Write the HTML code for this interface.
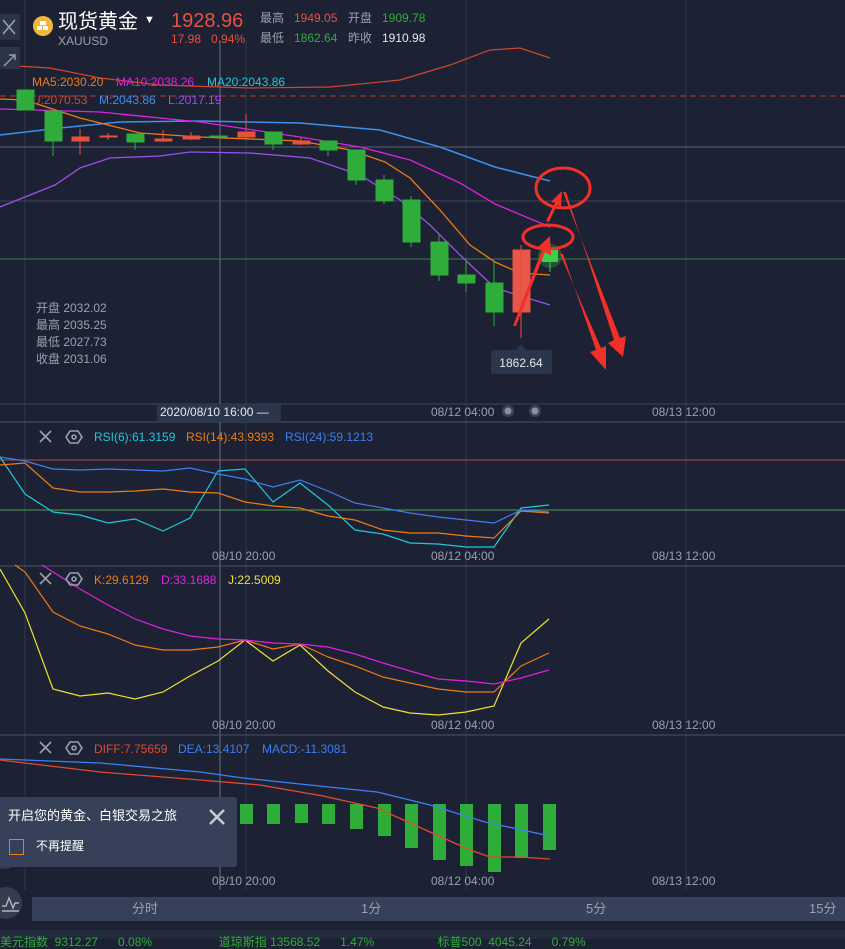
<!DOCTYPE html>
<html><head><meta charset="utf-8"><style>
body{margin:0;width:845px;height:939px;background:#1c2233;overflow:hidden;font-family:"Liberation Sans","Noto Sans CJK SC",sans-serif;position:relative}
.a{position:absolute;white-space:nowrap;line-height:1.15}
</style></head><body>
<svg class="a" style="left:0;top:0" width="845" height="939" font-family="Liberation Sans, Noto Sans CJK SC, sans-serif">
<g stroke="#2f3850" stroke-width="1">
<line x1="25" y1="0" x2="25" y2="890"/><line x1="466" y1="0" x2="466" y2="890"/><line x1="686" y1="0" x2="686" y2="890"/><line x1="246" y1="40" x2="246" y2="890"/>
</g>
<line x1="220" y1="40" x2="220" y2="890" stroke="#6a7184" stroke-width="1"/>
<line x1="0" y1="147" x2="845" y2="147" stroke="#5a6176"/>
<line x1="0" y1="201" x2="845" y2="201" stroke="#3e465c"/>
<line x1="0" y1="259" x2="845" y2="259" stroke="#3f7a4a"/>
<line x1="0" y1="404" x2="845" y2="404" stroke="#3e465c"/>
<line x1="0" y1="422" x2="845" y2="422" stroke="#4a5268"/>
<line x1="0" y1="566" x2="845" y2="566" stroke="#4a5268"/>
<line x1="0" y1="735" x2="845" y2="735" stroke="#4a5268"/>
<line x1="0" y1="96" x2="845" y2="96" stroke="#c0392b" stroke-dasharray="6,4"/>
<polyline fill="none" stroke="#d4442f" stroke-width="1.2" points="0,65 50,68 100,78 160,85 250,88 330,87 400,80 450,65 490,50 520,48 550,58"/>
<polyline fill="none" stroke="#3d8ff0" stroke-width="1.5" points="0,135 60,128 120,122 200,121 300,123 380,130 440,147 495,167 550,181"/>
<polyline fill="none" stroke="#e020e0" stroke-width="1.3" points="0,109 100,112 200,122 300,137 360,147 410,160 460,183 495,204 550,227"/>
<polyline fill="none" stroke="#f07a10" stroke-width="1.3" points="0,99 25,100 80,118 140,133 200,137 300,141 350,150 385,162 410,178 440,210 470,245 495,262 520,273 550,275"/>
<polyline fill="none" stroke="#9a50e8" stroke-width="1.3" points="0,207 55,185 80,168 110,158 160,156 190,152 250,153 310,158 360,175 400,200 430,225 460,255 495,288 550,305"/>
<g fill="#2ead3a" stroke="#2ead3a">
<rect x="17" y="90" width="17" height="20"/><rect x="45" y="111" width="17" height="30"/><line x1="53" y1="141" x2="53" y2="156"/>
<rect x="127" y="134" width="17" height="8"/><line x1="135" y1="142" x2="135" y2="150"/>
<rect x="210" y="136" width="17" height="1"/>
<rect x="265" y="132" width="17" height="12"/><line x1="273" y1="144" x2="273" y2="150"/>
<rect x="320" y="141" width="17" height="9"/><line x1="328" y1="150" x2="328" y2="156"/>
<rect x="348" y="150" width="17" height="30"/><line x1="356" y1="180" x2="356" y2="185"/>
<rect x="376" y="180" width="17" height="21"/><line x1="384" y1="175" x2="384" y2="204"/>
<rect x="403" y="200" width="17" height="42"/><line x1="411" y1="196" x2="411" y2="247"/>
<rect x="431" y="242" width="17" height="33"/><line x1="439" y1="234" x2="439" y2="281"/>
<rect x="458" y="275" width="17" height="8"/><line x1="466" y1="259" x2="466" y2="292"/>
<rect x="486" y="283" width="17" height="29"/><line x1="494" y1="262" x2="494" y2="326"/>
</g>
<circle cx="550" cy="256" r="12" fill="#2ead3a" opacity="0.35"/>
<rect x="542" y="250" width="16" height="12" fill="#3bd04a"/><line x1="550" y1="262" x2="550" y2="272" stroke="#3bd04a"/>
<g fill="#e8503f" stroke="#e8503f">
<rect x="72" y="137" width="17" height="4"/><line x1="80" y1="129" x2="80" y2="155"/>
<rect x="100" y="136" width="17" height="1"/><line x1="108" y1="133" x2="108" y2="140"/>
<rect x="155" y="139" width="17" height="2"/><line x1="163" y1="130" x2="163" y2="142"/>
<rect x="183" y="136" width="17" height="3"/><line x1="191" y1="132" x2="191" y2="140"/>
<rect x="238" y="132" width="17" height="5"/><line x1="246" y1="114" x2="246" y2="139"/>
<rect x="293" y="141" width="17" height="3"/><line x1="301" y1="138" x2="301" y2="145"/>
<rect x="513" y="250" width="17" height="62" fill="#e8574a"/><line x1="521" y1="245" x2="521" y2="338"/>
</g>
<g fill="none" stroke="#f2302a" stroke-width="3">
<ellipse cx="563" cy="188" rx="27" ry="20"/><ellipse cx="548" cy="237" rx="25" ry="12"/>
</g>
<g fill="#f2302a">
<polygon points="513,326 516,326 545,252 551,256 550,236 537,248 542,250"/>
<polygon points="546,221 549,222 557,205 561,207 562,191 551,202 555,203"/>
<polygon points="563,192 566,192 614,340 608,343 623,357 626,336 620,338"/>
<polygon points="560,254 563,254 596,350 590,352 606,370 606,346 601,348"/>
</g>
<rect x="491" y="350" width="61" height="24" rx="2" fill="#2b354b"/>
<polygon points="516,350 521,344 526,350" fill="#2b354b"/>
<text x="521" y="367" fill="#e6e8ee" font-size="12" text-anchor="middle">1862.64</text>
<g font-size="12" fill="#9aa0ad">
<text x="36" y="312">开盘 2032.02</text><text x="36" y="329">最高 2035.25</text><text x="36" y="346">最低 2027.73</text><text x="36" y="363">收盘 2031.06</text>
</g>
<rect x="157" y="404" width="124" height="18" fill="#2b354b"/>
<text x="160" y="416" fill="#e6e8ee" font-size="12">2020/08/10 16:00 —</text>
<text x="431" y="416" fill="#9aa0ad" font-size="12">08/12 04:00</text>
<circle cx="508" cy="411" r="6" fill="#3a4357"/><circle cx="508" cy="411" r="3.5" fill="#8a90a0"/>
<circle cx="535" cy="411" r="6" fill="#3a4357"/><circle cx="535" cy="411" r="3.5" fill="#8a90a0"/>
<text x="652" y="416" fill="#9aa0ad" font-size="12">08/13 12:00</text>
<g font-size="12">
<text x="32" y="86" fill="#f07a10">MA5:2030.20</text><text x="116" y="86" fill="#e020e0">MA10:2038.26</text><text x="207" y="86" fill="#1fc8d8">MA20:2043.86</text>
<text x="32" y="104" fill="#d4442f">U:2070.53</text><text x="99" y="104" fill="#3d8ff0">M:2043.86</text><text x="168" y="104" fill="#9a50e8">L:2017.19</text>
</g>
<line x1="0" y1="460" x2="845" y2="460" stroke="#b04a4a"/>
<line x1="0" y1="510" x2="845" y2="510" stroke="#4aa050"/>
<polyline fill="none" stroke="#1fc8d8" stroke-width="1.2" points="0,457 25,494 53,512 80,515 108,523 135,519 163,531 190,518 218,471 245,469 273,502 300,483 328,505 355,530 383,534 410,543 438,544 466,547 494,547 521,508 549,505"/>
<polyline fill="none" stroke="#f07a10" stroke-width="1.2" points="0,465 25,463 53,488 80,492 108,492 135,491 163,489 190,492 218,493 245,502 273,506 300,508 328,516 355,520 383,530 410,533 438,533 466,536 494,538 521,511 549,513"/>
<polyline fill="none" stroke="#3d7ff0" stroke-width="1.2" points="0,457 25,461 53,469 80,470 108,469 135,470 163,471 190,468 218,474 245,479 273,487 300,480 328,491 355,503 383,508 410,513 438,517 466,520 494,523 521,510 549,512"/>
<g font-size="12"><text x="94" y="441" fill="#1fc8d8">RSI(6):61.3159</text><text x="186" y="441" fill="#f07a10">RSI(14):43.9393</text><text x="285" y="441" fill="#3d7ff0">RSI(24):59.1213</text></g>
<text x="212" y="560" fill="#9aa0ad" font-size="12">08/10  20:00</text><text x="431" y="560" fill="#9aa0ad" font-size="12">08/12 04:00</text><text x="652" y="560" fill="#9aa0ad" font-size="12">08/13 12:00</text>
<polyline fill="none" stroke="#f0e030" stroke-width="1.2" points="0,569 25,613 53,689 80,696 108,693 135,699 163,692 190,676 218,661 245,640 273,661 300,645 328,671 355,692 383,707 410,713 438,715 466,712 494,706 521,643 549,619"/>
<polyline fill="none" stroke="#f07a10" stroke-width="1.2" points="15,565 25,572 53,612 80,626 108,634 135,645 163,650 190,650 218,647 245,640 273,649 300,644 328,657 355,666 383,677 410,683 438,689 466,692 494,692 521,666 549,653"/>
<polyline fill="none" stroke="#e020e0" stroke-width="1.2" points="42,565 80,589 108,605 135,619 163,629 190,636 218,639 245,640 273,643 300,644 328,647 355,654 383,663 410,671 438,679 466,681 494,684 521,678 549,670"/>
<g font-size="12"><text x="94" y="584" fill="#f07a10">K:29.6129</text><text x="161" y="584" fill="#e020e0">D:33.1688</text><text x="228" y="584" fill="#f0e030">J:22.5009</text></g>
<text x="212" y="729" fill="#9aa0ad" font-size="12">08/10  20:00</text><text x="431" y="729" fill="#9aa0ad" font-size="12">08/12 04:00</text><text x="652" y="729" fill="#9aa0ad" font-size="12">08/13 12:00</text>
<g fill="#2ead3a">
<rect x="240" y="804" width="13" height="20"/><rect x="267" y="804" width="13" height="20"/><rect x="295" y="804" width="13" height="19"/><rect x="322" y="804" width="13" height="20"/><rect x="350" y="804" width="13" height="25"/><rect x="378" y="804" width="13" height="32"/><rect x="405" y="804" width="13" height="44"/><rect x="433" y="804" width="13" height="56"/><rect x="460" y="804" width="13" height="62"/><rect x="488" y="804" width="13" height="68"/><rect x="515" y="804" width="13" height="54"/><rect x="543" y="804" width="13" height="46"/>
</g>
<polyline fill="none" stroke="#3d7ff0" stroke-width="1.3" points="0,759 100,763 200,772 243,778 300,784 377,792 430,805 485,822 550,836"/>
<polyline fill="none" stroke="#e04a30" stroke-width="1.3" points="0,760 100,772 200,780 260,785 323,796 377,808 430,832 470,850 490,857 520,857 550,859"/>
<g font-size="12"><text x="94" y="753" fill="#e04a30">DIFF:7.75659</text><text x="178" y="753" fill="#3d7ff0">DEA:13.4107</text><text x="262" y="753" fill="#3d7ff0">MACD:-11.3081</text></g>
<text x="212" y="885" fill="#9aa0ad" font-size="12">08/10  20:00</text><text x="431" y="885" fill="#9aa0ad" font-size="12">08/12 04:00</text><text x="652" y="885" fill="#9aa0ad" font-size="12">08/13 12:00</text>
<g stroke="#9aa0ad" stroke-width="1.6" fill="none">
<path d="M40 431 L51 442 M51 431 L40 442"/><path d="M40 573 L51 584 M51 573 L40 584"/><path d="M40 742 L51 753 M51 742 L40 753"/>
<polygon points="70,431 78,431 82,437 78,443 70,443 66,437"/><circle cx="74" cy="437" r="2"/>
<polygon points="70,573 78,573 82,579 78,585 70,585 66,579"/><circle cx="74" cy="579" r="2"/>
<polygon points="70,742 78,742 82,748 78,754 70,754 66,748"/><circle cx="74" cy="748" r="2"/>
</g>
</svg>
<div class="a" style="left:0;top:14px;width:20px;height:26px;background:#2c3447"></div>
<svg class="a" style="left:0;top:14px" width="20" height="26"><path d="M3 6 L15 20 M15 6 L3 20" stroke="#9aa0ad" stroke-width="1.6"/></svg>
<div class="a" style="left:0;top:47px;width:20px;height:22px;background:#2c3447"></div>
<svg class="a" style="left:0;top:47px" width="20" height="22"><path d="M6 17 L15 8 M9 8 L15 8 L15 13 M4 19 L8 15" stroke="#9aa0ad" stroke-width="1.4" fill="none"/></svg>
<svg class="a" style="left:32px;top:15px" width="22" height="22"><circle cx="11" cy="11" r="10" fill="#f0b83a"/><rect x="8" y="6" width="6" height="4" fill="#fff"/><rect x="5" y="11" width="5" height="4" fill="#fff"/><rect x="11" y="11" width="5" height="4" fill="#fff"/></svg>
<div class="a" style="left:58px;top:11px;font-size:20px;color:#fff">现货黄金</div>
<div class="a" style="left:144px;top:14px;font-size:11px;color:#fff">▼</div>
<div class="a" style="left:58px;top:35px;font-size:12px;color:#9aa0ad">XAUUSD</div>
<div class="a" style="left:171px;top:10px;font-size:20px;color:#e8503f">1928.96</div>
<div class="a" style="left:171px;top:33px;font-size:12px;color:#e8503f">17.98&nbsp;&nbsp;&nbsp;0.94%</div>
<div class="a" style="left:260px;top:12px;font-size:12px;color:#9aa0ad">最高</div>
<div class="a" style="left:294px;top:12px;font-size:12px;color:#e8503f">1949.05</div>
<div class="a" style="left:348px;top:12px;font-size:12px;color:#9aa0ad">开盘</div>
<div class="a" style="left:382px;top:12px;font-size:12px;color:#2ead3a">1909.78</div>
<div class="a" style="left:260px;top:32px;font-size:12px;color:#9aa0ad">最低</div>
<div class="a" style="left:294px;top:32px;font-size:12px;color:#2ead3a">1862.64</div>
<div class="a" style="left:348px;top:32px;font-size:12px;color:#9aa0ad">昨收</div>
<div class="a" style="left:382px;top:32px;font-size:12px;color:#e6e8ee">1910.98</div>
<div class="a" style="left:-10px;top:839px;width:30px;height:30px;border-radius:50%;background:#343c4e"></div>
<div class="a" style="left:-10px;top:887px;width:32px;height:32px;border-radius:50%;background:#343c4e"></div>
<svg class="a" style="left:0;top:893px" width="22" height="22"><path d="M2 13 L6 13 L9 5 L13 15 L15 10 L19 10 M2 18 L19 18" stroke="#b0b5c0" stroke-width="1.4" fill="none"/></svg>
<div class="a" style="left:0;top:797px;width:237px;height:70px;background:#364058;border-radius:0 3px 3px 0"></div>
<div class="a" style="left:8px;top:809px;font-size:13px;color:#fff">开启您的黄金、白银交易之旅</div>
<svg class="a" style="left:208px;top:808px" width="18" height="18"><path d="M2 2 L16 16 M16 2 L2 16" stroke="#c8ccd4" stroke-width="2.5"/></svg>
<div class="a" style="left:9px;top:839px;width:13px;height:14px;border:1.5px solid #f07a10"></div>
<div class="a" style="left:36px;top:840px;font-size:12px;color:#fff">不再提醒</div>
<div class="a" style="left:32px;top:897px;width:813px;height:24px;background:#36405a"></div>
<div class="a" style="left:132px;top:902px;font-size:13px;color:#9aa0ad">分时</div>
<div class="a" style="left:361px;top:902px;font-size:13px;color:#9aa0ad">1分</div>
<div class="a" style="left:586px;top:902px;font-size:13px;color:#9aa0ad">5分</div>
<div class="a" style="left:809px;top:902px;font-size:13px;color:#9aa0ad">15分</div>
<div class="a" style="left:0;top:930px;width:845px;height:9px;background:#232a3c"></div>
<div class="a" style="left:0;top:935px;font-size:12px;color:#2ead3a;line-height:14px">美元指数&nbsp;&nbsp;9312.27&nbsp;&nbsp;&nbsp;&nbsp;&nbsp;&nbsp;0.08%&nbsp;&nbsp;&nbsp;&nbsp;&nbsp;&nbsp;&nbsp;&nbsp;&nbsp;&nbsp;&nbsp;&nbsp;&nbsp;&nbsp;&nbsp;&nbsp;&nbsp;&nbsp;&nbsp;&nbsp;道琼斯指 13568.52&nbsp;&nbsp;&nbsp;&nbsp;&nbsp;&nbsp;1.47%&nbsp;&nbsp;&nbsp;&nbsp;&nbsp;&nbsp;&nbsp;&nbsp;&nbsp;&nbsp;&nbsp;&nbsp;&nbsp;&nbsp;&nbsp;&nbsp;&nbsp;&nbsp;&nbsp;标普500&nbsp;&nbsp;4045.24&nbsp;&nbsp;&nbsp;&nbsp;&nbsp;&nbsp;0.79%</div>
</body></html>
